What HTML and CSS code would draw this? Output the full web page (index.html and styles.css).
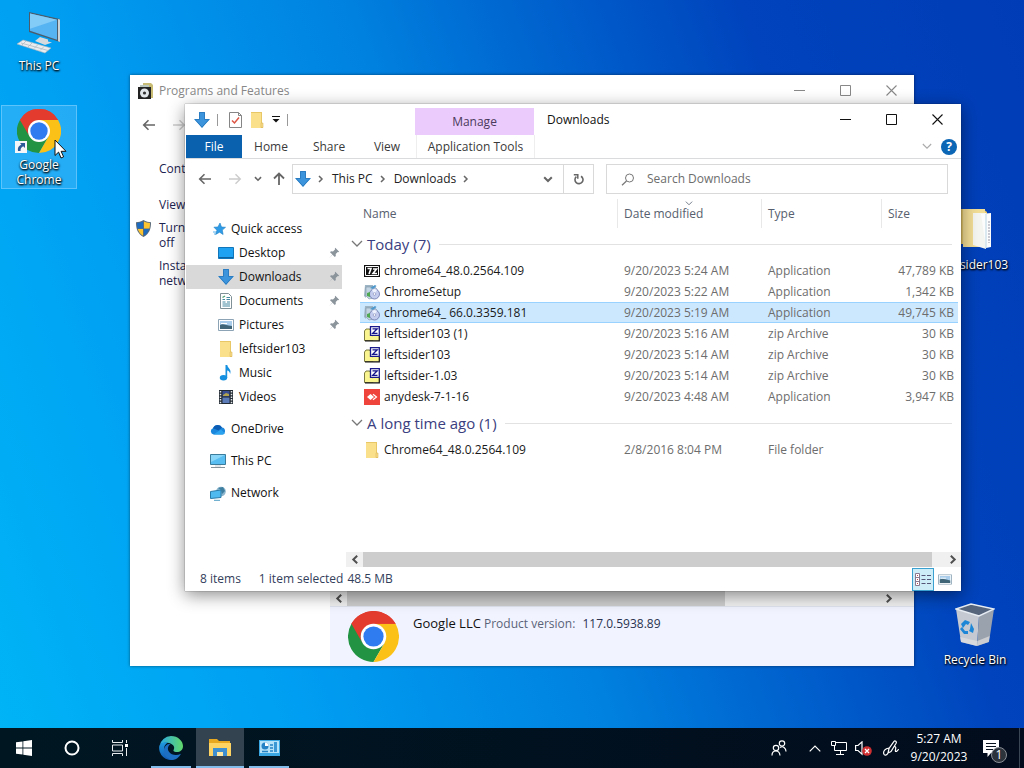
FILE: index.html
```
<!DOCTYPE html>
<html lang="en">
<head>
    <meta charset="UTF-8">
    <meta name="viewport" content="width=device-width, initial-scale=1.0">
    <title>Desktop</title>
    <link rel="stylesheet" href="styles.css">
</head>
<body>
    <!-- shared icons -->
    <svg class="sprite" aria-hidden="true">
        <symbol id="i-down" viewBox="0 0 16 16"><path d="M5 0h6v7h5l-8 9-8-9h5z" fill="#3b94dc"/><path d="M5.500 .5h5v7h4.400L8 15.200 1.100 7.500h4.400z" fill="none" stroke="#2b7cc0"/></symbol>
        <symbol id="i-folder" viewBox="0 0 16 16"><path d="M2 0h11v11h1v5H2z" fill="#e8c766"/><path d="M2 1h10v15H2z" fill="#fbe08c"/><path d="M12 11h2v4.500h-2z" fill="#f8dc86" stroke="#dcb95a" stroke-width=".6"/></symbol>
        <symbol id="i-back" viewBox="0 0 14 12"><path d="M13 6H2M6.500 1.200L1.700 6l4.800 4.800" fill="none" stroke="currentColor" stroke-width="1.600"/></symbol>
        <symbol id="i-fwd" viewBox="0 0 14 12"><path d="M1 6h11M7.500 1.200L12.300 6l-4.800 4.800" fill="none" stroke="currentColor" stroke-width="1.400"/></symbol>
        <symbol id="i-chev" viewBox="0 0 12 8"><path d="M1 1l5 5 5-5" fill="none" stroke="currentColor" stroke-width="1.300"/></symbol>
        <symbol id="i-caret" viewBox="0 0 10 7"><path d="M1.200 1.200L5 5l3.800-3.800" fill="none" stroke="currentColor" stroke-width="2"/></symbol>
        <symbol id="i-right" viewBox="0 0 6 8"><path d="M1 1l3 3-3 3" fill="none" stroke="currentColor" stroke-width="1.500"/></symbol>
        <symbol id="i-sleft" viewBox="0 0 8 9"><path d="M6.200 .8L2.300 4.500l3.900 3.700" fill="none" stroke="#505050" stroke-width="2"/></symbol>
        <symbol id="i-sright" viewBox="0 0 8 9"><path d="M1.800 .8l3.900 3.700-3.900 3.700" fill="none" stroke="#505050" stroke-width="2"/></symbol>
        <symbol id="i-min" viewBox="0 0 11 11"><path d="M0 5.500h11" stroke="currentColor"/></symbol>
        <symbol id="i-max" viewBox="0 0 11 11"><path d="M.5 .5h10v10H.5z" fill="none" stroke="currentColor"/></symbol>
        <symbol id="i-close" viewBox="0 0 11 11"><path d="M.5 .5l10 10M10.500 .5l-10 10" stroke="currentColor" stroke-width="1.100"/></symbol>
        <symbol id="i-pin" viewBox="0 0 12 12"><path d="M7.300 .8l3.900 3.900-1 .6-.5-.2-2 2 .1 2-1 1-2.300-2.400L1 11.200l3.400-3.600L2 5.300l1-1 2 .1 2-2-.2-.6z" fill="#8b949b"/></symbol>
        <symbol id="i-chrome" viewBox="0 0 48 48">
            <path d="M24 24L3.200 12A24 24 0 0 1 44.800 12z" fill="#e33b2e"/>
            <path d="M24 24L3.200 12A24 24 0 0 0 24 48l10.400-18z" fill="#229342"/>
            <path d="M24 12h20.800A24 24 0 0 1 24 48l10.400-18z" fill="#fbc116"/>
            <path d="M3.200 12A24 24 0 0 1 44.800 12H24a12 12 0 0 0-10.400 18z" fill="#e33b2e"/>
            <circle cx="24" cy="24" r="12" fill="#fff"/>
            <circle cx="24" cy="24" r="9.500" fill="#2f7cf0"/>
        </symbol>
        <symbol id="i-zip" viewBox="0 0 16 16"><path d="M.5 5l1.500-2h4v1h3v10.500H.5z" fill="#faf58e" stroke="#5c5a20" stroke-width=".8"/><path d="M9 10h6v4.500H1" fill="#faf58e"/><path d="M15.300 10v4.800H1" fill="none" stroke="#111" stroke-width="1.200"/><path d="M6.500 .7h8.800v8.600H6.500z" fill="#fff" stroke="#1a1a8c" stroke-width="1.300"/><path d="M8.500 2.800h4.700l-4.500 4.500h4.800" fill="none" stroke="#14148c" stroke-width="1.300"/></symbol>
        <symbol id="i-setup" viewBox="0 0 16 16"><path d="M1 1h8v3H2v10L0 12z" fill="#9db4c4"/><path d="M2 3h9l2 2v8l-8 2-3-3z" fill="#c3d5e3" stroke="#8297a8" stroke-width=".6"/><path d="M6 4l5-3 1.500 1L9 5z" fill="#4c97cb"/><circle cx="10.500" cy="10" r="5" fill="#c5cdef" stroke="#6874a8" stroke-width=".8"/><path d="M10.500 10L8 5.800a5 5 0 0 1 5 0z" fill="#eef2ff"/><circle cx="10.500" cy="10" r="1.300" fill="#fff" stroke="#6874a8" stroke-width=".5"/><path d="M3 9l3-1v5l-3-1z" fill="#4fa852"/></symbol>
        <symbol id="i-picture" viewBox="0 0 16 12"><path d="M.5 .5h15v11H.5z" fill="#fff" stroke="#8ba3b5"/><path d="M2 2h12v8H2z" fill="#a9cdea"/><path d="M2 6c3-2 5 0 12 1v3H2z" fill="#3f6577"/><path d="M3 4.500h6" stroke="#fff"/></symbol>
    </svg>

    <main class="desktop">
        <a href="#" class="shortcut this-pc">
            <svg width="44" height="42" viewBox="0 0 44 42">
                <path d="M12 0l31 7v23L12 20z" fill="#4b5d6c"/><path d="M13 1.500l27 6.200v20L13 18.800z" fill="#56b4f2"/><path d="M13 1.500l27 6.200-27 9z" fill="#84ccf8"/><path d="M41 7l2 .5V30l-2-.8z" fill="#c8d2d9"/>
                <path d="M23 25l8 2.500v2l4 1-7 2.500-10-4z" fill="#d4dade"/><path d="M6 28l28 8-6 5L0 32z" fill="#e9edf0" stroke="#a8b4bc" stroke-width=".6"/><path d="M4 31l27 7.500M9 29l-4 4M15 31l-4 4M21 32.500l-4 4M27 34.500l-4 4" stroke="#b0bac1" stroke-width=".8"/>
            </svg>
            <span>This PC</span>
        </a>
        <a href="#" class="shortcut chrome selected">
            <span class="icon-wrap">
                <svg width="44" height="44"><use href="#i-chrome"/></svg>
                <svg class="link-badge" width="12" height="12" viewBox="0 0 12 12"><path d="M0 0h12v12H0z" fill="#f4f6f8"/><path d="M5 2h5v5L8.200 5.200C6 6.400 5.400 7.700 5.600 10H3C2.300 7 3.600 4.800 6.400 3.500z" fill="#2a5a98"/></svg>
            </span>
            <span>Google Chrome</span>
        </a>
        <a href="#" class="shortcut folder">
            <svg width="40" height="44" viewBox="0 0 40 44"><path d="M0 0h28l4 3v32H0z" fill="#e5c66c"/><path d="M8 0h22v38H8z" fill="#f2dd96"/><path d="M18 4h13v36l-13-4z" fill="#f4f4f0"/><path d="M26 5l10-1v34l-5 1z" fill="#fcfcfc"/><path d="M31 5v34" stroke="#b9d4e4"/><path d="M34 12v22" stroke="#99a" stroke-dasharray="2 1"/></svg>
            <span>leftsider103</span>
        </a>
        <a href="#" class="shortcut bin">
            <svg width="40" height="44" viewBox="0 0 40 44"><path d="M1 6l23 7-2 30L6 39z" fill="#c5cad2"/><path d="M24 13l15-7-5 33-12 4z" fill="#9aa2ae"/><path d="M1 6L16 1l23 5-15 7z" fill="#56657c" stroke="#e8edf3" stroke-width="1.400"/><path d="M5 34l17 4-.4 5L6 39zM22.300 38l12.400-5-1 6L22 43z" fill="#dfe0df" opacity=".7"/><path d="M6 21l4-4 5 2-2 3-2-1-3 4zM16 20l3 6-1 4-4-2 1-2zM5 26l4 5h4v-3h-3l-3-4z" fill="#1d86d6"/></svg>
            <span>Recycle Bin</span>
        </a>

        <section class="window programs">
            <header class="titlebar">
                <svg width="15" height="16" viewBox="0 0 15 16"><path d="M5 0h8l2 2v13H5z" fill="#c8bb74"/><path d="M2 2h9v3H2z" fill="#b9c7bf"/><path d="M0 4h13v12H0z" fill="#222"/><circle cx="6.500" cy="10" r="4.500" fill="#e2e6e8"/><circle cx="6.500" cy="10" r="1.600" fill="#333"/></svg>
                <h2>Programs and Features</h2>
                <div class="controls">
                    <button aria-label="Minimize"><svg width="11" height="11"><use href="#i-min"/></svg></button>
                    <button aria-label="Maximize"><svg width="11" height="11"><use href="#i-max"/></svg></button>
                    <button aria-label="Close"><svg width="11" height="11"><use href="#i-close"/></svg></button>
                </div>
            </header>
            <div class="history">
                <button aria-label="Back"><svg width="14" height="12"><use href="#i-back"/></svg></button>
                <button aria-label="Forward" class="off"><svg width="14" height="12"><use href="#i-fwd"/></svg></button>
            </div>
            <div class="programs-body">
                <ul class="tasks">
                    <li><a href="#">Control Panel Home</a></li>
                    <li class="second"><a href="#">View installed updates</a></li>
                    <li>
                        <svg class="shield" width="15" height="17" viewBox="0 0 15 17"><path d="M7.500 0C5 1.500 2.500 2.200 0 2.200 0 9 1.500 13.500 7.500 17 13.500 13.500 15 9 15 2.200 12.500 2.200 10 1.500 7.500 0z" fill="#5b6a78"/><path d="M7 1.500v7H1.500A20 20 0 0 1 1 3c2.500 0 4.500-.8 6-1.500zM8 9h5.300C12.300 12 10.500 14.200 8 15.700z" fill="#1d6bbf"/><path d="M8 1.500c1.500.7 3.500 1.500 6 1.500 0 2-.1 3.800-.5 5.500H8zM1.700 9H7v6.700C4.500 14.200 2.700 12 1.700 9z" fill="#fcc530"/></svg>
                        <a href="#">Turn Windows features on or off</a>
                    </li>
                    <li><a href="#">Install a program from the network</a></li>
                </ul>
                <div class="details">
                    <div class="scrollbar">
                        <button aria-label="Scroll left"><svg width="8" height="9"><use href="#i-sleft"/></svg></button>
                        <div class="track"><div class="thumb"></div></div>
                        <button aria-label="Scroll right"><svg width="8" height="9"><use href="#i-sright"/></svg></button>
                    </div>
                    <div class="product">
                        <svg width="51" height="51"><use href="#i-chrome"/></svg>
                        <p><b>Google LLC</b> <span>Product version:</span> <em>117.0.5938.89</em></p>
                    </div>
                </div>
            </div>
        </section>

        <section class="window explorer">
            <header class="titlebar">
                <div class="quick-tools">
                    <svg width="16" height="16"><use href="#i-down"/></svg>
                    <i></i>
                    <button aria-label="Properties"><svg width="13" height="16" viewBox="0 0 13 16"><path d="M.5 .5h9l3 3v12H.5z" fill="#fff" stroke="#858585"/><path d="M9.500 .5v3h3" fill="none" stroke="#858585"/><path d="M3 8.500l2.500 2.500L10 5.500" fill="none" stroke="#dd5544" stroke-width="1.500"/></svg></button>
                    <button aria-label="New folder"><svg width="16" height="16"><use href="#i-folder"/></svg></button>
                    <button aria-label="Customize"><svg width="8" height="7" viewBox="0 0 8 7"><path d="M0 .5h8" stroke="#111"/><path d="M.5 3h7L4 6.500z" fill="#111"/></svg></button>
                    <i></i>
                </div>
                <div class="context-tab">Manage</div>
                <h2>Downloads</h2>
                <div class="controls">
                    <button aria-label="Minimize"><svg width="11" height="11"><use href="#i-min"/></svg></button>
                    <button aria-label="Maximize"><svg width="11" height="11"><use href="#i-max"/></svg></button>
                    <button aria-label="Close"><svg width="11" height="11"><use href="#i-close"/></svg></button>
                </div>
            </header>
            <nav class="ribbon">
                <button class="file">File</button>
                <button>Home</button>
                <button>Share</button>
                <button>View</button>
                <button class="tools">Application Tools</button>
                <button class="collapse" aria-label="Expand ribbon"><svg width="10" height="7"><use href="#i-chev"/></svg></button>
                <button class="help" aria-label="Help">?</button>
            </nav>
            <div class="address-row">
                <button aria-label="Back"><svg width="14" height="12"><use href="#i-back"/></svg></button>
                <button aria-label="Forward" class="off"><svg width="14" height="12"><use href="#i-fwd"/></svg></button>
                <button aria-label="Recent" class="recent"><svg width="8" height="6"><use href="#i-caret"/></svg></button>
                <button aria-label="Up" class="up"><svg width="12" height="14" viewBox="0 0 12 14"><path d="M6 13V2M1 6.500l5-5 5 5" fill="none" stroke="#666" stroke-width="1.800"/></svg></button>
                <div class="address">
                    <svg width="16" height="16"><use href="#i-down"/></svg>
                    <svg class="sep" width="6" height="8"><use href="#i-right"/></svg>
                    <a href="#">This PC</a>
                    <svg class="sep" width="6" height="8"><use href="#i-right"/></svg>
                    <a href="#">Downloads</a>
                    <svg class="sep" width="6" height="8"><use href="#i-right"/></svg>
                    <button class="drop" aria-label="Previous locations"><svg width="10" height="7"><use href="#i-caret"/></svg></button>
                    <button class="refresh" aria-label="Refresh"><svg width="11" height="12" viewBox="0 0 11 12"><path d="M8 3.200A4 4 0 1 1 3.400 3.600" fill="none" stroke="#666" stroke-width="1.600"/><path d="M.8 1.800h4v4" fill="none" stroke="#666" stroke-width="1.500"/></svg></button>
                </div>
                <label class="search">
                    <svg width="14" height="13" viewBox="0 0 14 13"><circle cx="8.500" cy="5" r="4" fill="none" stroke="#777"/><path d="M5.500 8L1 12.300" stroke="#777" stroke-width="1.200"/></svg>
                    <input type="search" aria-label="Search Downloads" placeholder="Search Downloads">
                </label>
            </div>
            <div class="explorer-body">
                <ul class="places">
                    <li><a href="#"><svg width="16" height="16" viewBox="0 0 16 16"><path d="M10 2l1.500 4 4 .3-3.200 2.800.8 4.400-3.500-2.300-4 2.300 1.300-4.300-3-3 4-.2z" fill="#2f9be6" stroke="#1d7fc4" stroke-width=".6"/><path d="M3 11h3M4 13h1.500" stroke="#57b1ec"/></svg>Quick access</a></li>
                    <li class="sub"><a href="#"><svg width="16" height="12" viewBox="0 0 16 12"><path d="M.5 .5h15v11H.5z" fill="#1fa2f2" stroke="#1276bb"/><path d="M1 10.500h14" stroke="#0d639f"/></svg>Desktop</a><svg class="pin" width="12" height="12"><use href="#i-pin"/></svg></li>
                    <li class="sub current"><a href="#"><svg width="16" height="16"><use href="#i-down"/></svg>Downloads</a><svg class="pin" width="12" height="12"><use href="#i-pin"/></svg></li>
                    <li class="sub"><a href="#"><svg width="16" height="16" viewBox="0 0 16 16"><path d="M2.500 .5h8l3 3v12h-11z" fill="#fff" stroke="#7f9096"/><path d="M4.500 6.500h2.500M8.500 4.500h3.500M8.500 6.500h3.500M4.500 9h3M9 9h3M4.500 11h7.500M4.500 13h7.500" stroke="#4288a0"/><path d="M4.500 4.500L7 3" stroke="#4f9f70" stroke-width="1.400"/></svg>Documents</a><svg class="pin" width="12" height="12"><use href="#i-pin"/></svg></li>
                    <li class="sub"><a href="#"><svg width="16" height="12"><use href="#i-picture"/></svg>Pictures</a><svg class="pin" width="12" height="12"><use href="#i-pin"/></svg></li>
                    <li class="sub"><a href="#"><svg width="16" height="16"><use href="#i-folder"/></svg>leftsider103</a></li>
                    <li class="sub"><a href="#"><svg width="16" height="16" viewBox="0 0 16 16"><ellipse cx="5.500" cy="12.800" rx="3.700" ry="2.700" fill="#1590e0"/><path d="M7.500 0h1.800c.4 3.500 4.600 4 2.800 9-.3-2.500-1.500-3.200-2.900-3.500V13H7.500z" fill="#1590e0"/></svg>Music</a></li>
                    <li class="sub"><a href="#"><svg width="16" height="16" viewBox="0 0 16 16"><path d="M1 1h14v14H1z" fill="#222a33"/><path d="M4.500 2h7v5.500h-7z" fill="#3a4e94"/><path d="M4.500 8.500h7V14h-7z" fill="#5a7ab8"/><path d="M5 6l3-2 3 1v2H5z" fill="#b3a34c"/><path d="M2.500 2v13M13.500 2v13" stroke="#e3e6e8" stroke-width="1.500" stroke-dasharray="1.500 1.200"/></svg>Videos</a></li>
                    <li class="root"><a href="#"><svg width="16" height="12" viewBox="0 0 16 12"><path d="M3.500 11.500a3.300 3.300 0 0 1-.6-6.300A5 5 0 0 1 12 4.500a3.600 3.600 0 0 1 .5 7z" fill="#1a87dc"/><path d="M3 5.300A5 5 0 0 1 12 4.500L8.500 7.500z" fill="#0d5cb4"/><path d="M3.500 11.500L11 6.600l3.800 4c-.6.600-1.300.9-2.300.9z" fill="#2ba3ef"/></svg>OneDrive</a></li>
                    <li class="root"><a href="#"><svg width="16" height="15" viewBox="0 0 16 15"><path d="M.5 .5h15v10H.5z" fill="#58bdf0" stroke="#3b7b9c"/><path d="M1 1h14L1 8z" fill="#8ad6f8"/><path d="M1 13.500h14" stroke="#87939b"/><path d="M5 12h6" stroke="#c3ccd2"/></svg>This PC</a></li>
                    <li class="root"><a href="#"><svg width="16" height="15" viewBox="0 0 16 15"><circle cx="11" cy="5.500" r="4.800" fill="#8bb6cd"/><path d="M8 2l3 2 1 4 3-3-2-4z" fill="#3f7e9e"/><path d="M.5 5.500L11 4v7.500L.5 12.500z" fill="#4fbaf0" stroke="#2a7aa8"/><path d="M4 14.300h6" stroke="#4f9fc5"/></svg>Network</a></li>
                </ul>
                <div class="files">
                    <table>
                        <colgroup><col><col class="c-date"><col class="c-type"><col class="c-size"></colgroup>
                        <thead>
                            <tr><th>Name</th><th>Date modified<svg class="sort" width="8" height="5"><use href="#i-chev"/></svg></th><th>Type</th><th>Size</th></tr>
                        </thead>
                        <tbody>
                            <tr class="group"><th colspan="4"><div><svg width="12" height="8"><use href="#i-chev"/></svg><span>Today (7)</span></div></th></tr>
                            <tr><td><div><svg width="16" height="16" viewBox="0 0 16 16"><path d="M0 2h16v12H0z" fill="#111"/><path d="M1.500 3.500h13v9h-13z" fill="none" stroke="#fff"/><path d="M3.500 5.500h3.500l-2 5.500M9 6h3.500L9 10.500h4" fill="none" stroke="#fff" stroke-width="1.600"/></svg>chrome64_48.0.2564.109</div></td><td>9/20/2023 5:24 AM</td><td>Application</td><td>47,789 KB</td></tr>
                            <tr><td><div><svg width="16" height="16"><use href="#i-setup"/></svg>ChromeSetup</div></td><td>9/20/2023 5:22 AM</td><td>Application</td><td>1,342 KB</td></tr>
                            <tr class="selected"><td><div><svg width="16" height="16"><use href="#i-setup"/></svg>chrome64_ 66.0.3359.181</div></td><td>9/20/2023 5:19 AM</td><td>Application</td><td>49,745 KB</td></tr>
                            <tr><td><div><svg width="16" height="16"><use href="#i-zip"/></svg>leftsider103 (1)</div></td><td>9/20/2023 5:16 AM</td><td>zip Archive</td><td>30 KB</td></tr>
                            <tr><td><div><svg width="16" height="16"><use href="#i-zip"/></svg>leftsider103</div></td><td>9/20/2023 5:14 AM</td><td>zip Archive</td><td>30 KB</td></tr>
                            <tr><td><div><svg width="16" height="16"><use href="#i-zip"/></svg>leftsider-1.03</div></td><td>9/20/2023 5:14 AM</td><td>zip Archive</td><td>30 KB</td></tr>
                            <tr><td><div><svg width="16" height="16" viewBox="0 0 16 16"><path d="M0 0h16v16H0z" fill="#ef443b"/><path d="M6.500 5L10 8l-3.500 3L3 8z" fill="#fff"/><path d="M9 5.200L12.500 8 9 10.800" fill="none" stroke="#fff" stroke-width="1.200"/></svg>anydesk-7-1-16</div></td><td>9/20/2023 4:48 AM</td><td>Application</td><td>3,947 KB</td></tr>
                            <tr class="group"><th colspan="4"><div><svg width="12" height="8"><use href="#i-chev"/></svg><span>A long time ago (1)</span></div></th></tr>
                            <tr><td><div><svg width="16" height="16"><use href="#i-folder"/></svg>Chrome64_48.0.2564.109</div></td><td>2/8/2016 8:04 PM</td><td>File folder</td><td></td></tr>
                        </tbody>
                    </table>
                    <div class="scrollbar">
                        <button aria-label="Scroll left"><svg width="8" height="9"><use href="#i-sleft"/></svg></button>
                        <div class="track"><div class="thumb"></div></div>
                        <button aria-label="Scroll right"><svg width="8" height="9"><use href="#i-sright"/></svg></button>
                    </div>
                </div>
            </div>
            <footer class="status">
                <span class="count">8 items</span>
                <span>1 item selected</span>
                <span class="size">48.5 MB</span>
                <button class="view active" aria-label="Details"><svg width="16" height="13" viewBox="0 0 16 13"><path d="M.5 .5h4v12h-4zM.5 4.500h4M.5 8.500h4" fill="#fff" stroke="#8a7890"/><path d="M2.500 2v1M2.500 6v1M2.500 10v1" stroke="#c04848"/><path d="M6.500 2.500h4M12 2.500h4M6.500 6.500h4M12 6.500h4M6.500 10.500h4M12 10.500h4" stroke="#557"/></svg></button>
                <button class="view" aria-label="Large icons"><svg width="14" height="11" viewBox="0 0 16 12"><use href="#i-picture"/></svg></button>
            </footer>
        </section>

        <svg class="cursor" width="13" height="20" viewBox="0 0 13 20"><path d="M1 1v15.500l3.600-3.400L7 19l2.600-1.200-2.500-5.500H12z" fill="#fff" stroke="#111"/></svg>
    </main>

    <footer class="taskbar">
        <button aria-label="Start"><svg width="16" height="16" viewBox="0 0 16 16"><path d="M0 2.300L6.500 1.400v6.200H0zM7.300 1.300L16 0v7.600H7.300zM0 8.400h6.500v6.200L0 13.700zM7.300 8.400H16V16l-8.700-1.300z" fill="#fff"/></svg></button>
        <button aria-label="Cortana"><svg width="16" height="16" viewBox="0 0 16 16"><circle cx="8" cy="8" r="6.500" fill="none" stroke="#fff" stroke-width="2"/></svg></button>
        <button aria-label="Task View"><svg width="16" height="16" viewBox="0 0 16 16" fill="none" stroke="#e8ecef"><path d="M.5 0v2.500h10V0M.5 5h10v6H.5zM.5 16v-2.500h10V16M14.500 0v3M14.500 8v8"/><path d="M13 4h3v3h-3z" fill="#fff" stroke="none"/></svg></button>
        <button aria-label="Edge" class="app edge"><svg width="24" height="24" viewBox="0 0 24 24">
            <defs>
                <linearGradient id="edge-top"><stop offset="0" stop-color="#2aa8e4"/><stop offset="1" stop-color="#62d86a"/></linearGradient>
                <linearGradient id="edge-side" x2="0" y2="1"><stop offset="0" stop-color="#1f9be0"/><stop offset="1" stop-color="#1258b4"/></linearGradient>
            </defs>
            <path d="M.5 10A12 12 0 0 1 12 0c7 0 12 5 12 10 0 4-3 6-6 6-3.500 0-4-1.500-3.200-2.600C16 11.500 14.500 8 10 7 5 6 1 8 .5 10z" fill="url(#edge-top)"/>
            <path d="M.3 10C1 7 5 5.500 9 6.500c-4 2-5 6.500-3 10.500 1.800 3.800 5.500 6 9.500 6.500A12 12 0 0 1 .3 10z" fill="url(#edge-side)"/>
            <path d="M11.500 8C9 9.500 8 13 10 15.800c2.300 3.300 7.500 4.200 12 2C20 21.500 17 24 13 24 7 22.500 4 18 5 13c.7-3.500 3.500-5.600 6.500-5z" fill="#1d6fc4"/>
        </svg></button>
        <button aria-label="File Explorer" class="app open"><svg width="22" height="18" viewBox="0 0 22 18"><path d="M0 0h8l2 2h11v5H0z" fill="#e8a921"/><path d="M0 4h22v13H0z" fill="#fdd463"/><path d="M4 9h14v8h-4v-4H8v4H4z" fill="#3e8fd0"/><path d="M8 13h6v4H8z" fill="#ffe9a6"/></svg></button>
        <button aria-label="Control Panel" class="app"><svg width="21" height="16" viewBox="0 0 21 16"><path d="M0 0h21v16H0z" fill="#3aa6e2"/><path d="M1 1h19v12H1z" fill="#b5e2f8"/><circle cx="6" cy="6" r="3.500" fill="#2582c4"/><path d="M6 6V2.500A3.500 3.500 0 0 1 9.500 6z" fill="#fff"/><path d="M11 5h3M11 8h3M11 11h3M3 11.500h6" stroke="#2582c4" stroke-width="1.500"/><path d="M15 2h3v10h-3z" fill="#3c98d5"/></svg></button>
        <div class="tray">
            <button class="people" aria-label="People"><svg width="16" height="16" viewBox="0 0 16 16" fill="none" stroke="#fff" stroke-width="1.200"><circle cx="11" cy="3.500" r="2.700"/><circle cx="5" cy="8" r="2.700"/><path d="M1 15.500c0-6 7.500-6 8 0M9 7.500c3-2 6 .5 6 4"/></svg></button>
            <button class="more" aria-label="Show hidden icons"><svg width="12" height="7" viewBox="0 0 12 7"><path d="M.7 6.300L6 1l5.300 5.300" fill="none" stroke="#fff" stroke-width="1.200"/></svg></button>
            <button aria-label="Network"><svg width="16" height="14" viewBox="0 0 16 14" fill="none" stroke="#fff"><path d="M5 1.500h10.500v8H3.500V5M9.500 9.500v4M5 13.500h8"/><path d="M.5 .5h4v4h-4z"/></svg></button>
            <button aria-label="Volume"><svg width="17" height="15" viewBox="0 0 17 15"><path d="M.6 4.500H3L7 .9v12.200L3 9.500H.6z" fill="none" stroke="#fff" stroke-width="1.200"/><circle cx="12" cy="10" r="4.800" fill="#cf2f31"/><path d="M10 8l4 4M14 8l-4 4" stroke="#fff" stroke-width="1.300"/></svg></button>
            <button class="pen" aria-label="Windows Ink"><svg width="16" height="16" viewBox="0 0 16 16" fill="none" stroke="#fff" stroke-width="1.200"><path d="M5 13l1-4.500L11 1.300c1-1 3 .3 2.100 1.900L8 11.500zM11.500 6.500c3 0-.5 5 1.500 5 1.300 0 1.500-2 3-2M6 8C2 8.500 0 11.500 .8 13.800c.6 2 3 1.800 4.200-.8"/></svg></button>
            <div class="clock"><time>5:27 AM</time><time>9/20/2023</time></div>
            <button class="notify" aria-label="Notifications"><svg width="16" height="17" viewBox="0 0 16 17"><path d="M0 0h16v13h-8l-3.500 4v-4H0z" fill="#fff"/><path d="M3 3.500h10M3 6.500h10M3 9.500h7" stroke="#0a1420"/></svg><span>1</span></button>
        </div>
    </footer>
</body>
</html>
```
FILE: styles.css
```
* {
    box-sizing: border-box;
}
body {
    font-family: 'Open Sans', 'Noto Sans', sans-serif;
    font-size: 12px;
    line-height: 16px;
    margin: 0;
    height: 100vh;
    display: flex;
    flex-direction: column;
    overflow: hidden;
    color: #111111;
}
button {
    font: inherit;
    color: inherit;
    border: none;
    padding: 0;
    background: none;
    display: flex;
    align-items: center;
    justify-content: center;
}
a {
    color: inherit;
    text-decoration: none;
}
ul {
    list-style: none;
    margin: 0;
    padding: 0;
}
h2 {
    font-size: 12px;
    font-weight: normal;
    margin: 0;
}
svg {
    display: block;
    flex: none;
}
.sprite {
    position: absolute;
    width: 0;
    height: 0;
}

/* desktop */
.desktop {
    flex: 1;
    position: relative;
    background: linear-gradient(70deg, #00b4f6 0%, #009ef2 24%, #0082e0 47%, #0066d0 60%, #0043bc 78%, #003cb6 100%);
}
.shortcut {
    position: absolute;
    width: 76px;
    display: flex;
    flex-direction: column;
    align-items: center;
    text-align: center;
    line-height: 15px;
    color: #ffffff;
    text-shadow: 0 1px 2px #000000, 1px 1px 2px #000000;
}
.this-pc {
    left: 1px;
    top: 12px;
    gap: 4px;
}
.chrome {
    left: 1px;
    top: 105px;
    padding: 3px 8px 0;
    gap: 4px;
    height: 84px;
}
.shortcut.selected {
    background: rgba(90, 190, 250, 0.4);
    border: 1px solid rgba(150, 215, 255, 0.5);
}
.icon-wrap {
    position: relative;
}
.link-badge {
    position: absolute;
    left: -2px;
    bottom: 0;
}
.folder {
    right: 11px;
    top: 209px;
    gap: 4px;
}
.bin {
    right: 11px;
    top: 603px;
    gap: 5px;
}
.cursor {
    position: absolute;
    left: 54px;
    top: 139px;
}

/* windows */
.window {
    position: absolute;
    display: flex;
    flex-direction: column;
    background: #ffffff;
}
.programs {
    left: 130px;
    right: 110px;
    top: 75px;
    bottom: 62px;
    box-shadow: 0 0 3px rgba(0, 0, 0, 0.5);
}
.explorer {
    left: 185px;
    right: 63px;
    top: 104px;
    bottom: 137px;
    padding-left: 1px;
    box-shadow: 0 0 1px rgba(0, 0, 0, 0.6), 0 4px 16px rgba(0, 0, 0, 0.45);
}
.titlebar {
    display: flex;
    align-items: center;
    height: 31px;
}
.controls {
    display: flex;
    margin-left: auto;
}
.controls button {
    width: 46px;
    height: 30px;
}

/* programs and features */
.programs .titlebar {
    color: #888888;
    padding-left: 8px;
}
.programs .titlebar h2 {
    margin-left: 6px;
}
.history {
    display: flex;
    gap: 16px;
    padding: 13px 12px;
    color: #666666;
}
.off {
    color: #cccccc;
}
.programs-body {
    flex: 1;
    display: flex;
}
.tasks {
    width: 200px;
    padding: 17px 8px 0 29px;
    line-height: 15px;
    color: #1c2350;
}
.tasks li {
    position: relative;
    margin-bottom: 8px;
}
.tasks .second {
    margin-top: 21px;
}
.shield {
    position: absolute;
    left: -23px;
    top: 0;
}
.details {
    flex: 1;
    display: flex;
    flex-direction: column;
    justify-content: flex-end;
}
.scrollbar {
    display: flex;
    height: 15px;
    background: #f0f0f0;
}
.scrollbar button {
    width: 17px;
}
.track {
    flex: 1;
}
.thumb {
    height: 100%;
    width: 98%;
    background: #cdcdcd;
}
.details .scrollbar {
    padding-right: 17px;
}
.details .thumb {
    width: 71%;
}
.product {
    display: flex;
    gap: 14px;
    height: 60px;
    padding: 4px 18px;
    background: #f1f4ff;
    border-top: 1px solid #dde2ee;
}
.product p {
    margin: 4px 0;
    color: #5a6378;
}
.product b {
    font-size: 13px;
    font-weight: normal;
    color: #111111;
}
.product em {
    font-style: normal;
    color: #2b3350;
    margin-left: 4px;
}

/* explorer ribbon */
.explorer .titlebar {
    padding-right: 1px;
}
.quick-tools {
    display: flex;
    align-items: center;
    gap: 7px;
    width: 229px;
    padding-left: 8px;
}
.quick-tools i {
    width: 1px;
    height: 12px;
    background: #999999;
}
.quick-tools i:first-of-type {
    margin-right: 4px;
}
.context-tab {
    width: 119px;
    height: 27px;
    margin-top: 4px;
    padding-top: 6px;
    text-align: center;
    background: #eacbfb;
    color: #4a3a5c;
}
.explorer .titlebar h2 {
    margin-left: 13px;
}
.ribbon {
    display: flex;
    align-items: center;
    height: 24px;
    border-bottom: 1px solid #dadbdc;
    color: #3a3a3a;
}
.ribbon button {
    height: 23px;
    width: 58px;
}
.ribbon .file {
    width: 56px;
    background: #0a62ae;
    color: #ffffff;
}
.ribbon .tools {
    width: 119px;
    border: 1px solid #eeeeee;
    border-width: 0 1px;
}
.ribbon .collapse {
    width: 22px;
    margin-left: auto;
    color: #aaaaaa;
}
.ribbon .help {
    width: 16px;
    height: 16px;
    margin: 0 4px 0 3px;
    border-radius: 50%;
    background: #0b66b5;
    color: #ffffff;
    font-weight: bold;
}
.address-row {
    display: flex;
    align-items: center;
    height: 40px;
    padding: 0 13px 0 12px;
    color: #666666;
}
.address-row .off {
    color: #cccccc;
    margin-left: 16px;
}
.recent {
    margin-left: 12px;
}
.up {
    margin: 0 7px 0 11px;
}
.address {
    flex: 298;
    display: flex;
    align-items: center;
    height: 30px;
    border: 1px solid #d9d9d9;
    padding-left: 2px;
}
.address a {
    color: #222222;
}
.sep {
    margin: 0 8px 0 7px;
}
.drop {
    width: 30px;
    margin-left: auto;
}
.refresh {
    width: 30px;
    height: 28px;
    border-left: 1px solid #d9d9d9;
}
.search {
    flex: 312;
    display: flex;
    align-items: center;
    gap: 12px;
    height: 30px;
    margin-left: 12px;
    padding: 0 14px;
    border: 1px solid #d9d9d9;
}
.search input {
    flex: 1;
    min-width: 0;
    border: none;
    padding: 0;
    background: none;
    font: inherit;
    outline: none;
    appearance: none;
}
.search input::placeholder {
    color: #6d6d6d;
}

/* places */
.explorer-body {
    flex: 1;
    display: flex;
    min-height: 0;
}
.places {
    width: 156px;
    margin-right: 4px;
    padding-top: 18px;
}
.places li {
    display: flex;
    align-items: center;
    height: 24px;
    padding: 0 2px 0 24px;
}
.places li.sub {
    padding-left: 32px;
}
.places li.root {
    margin-top: 8px;
}
.places a {
    display: flex;
    align-items: center;
    gap: 5px;
}
.places .current {
    background: #d9d9d9;
}
.pin {
    margin-left: auto;
}

/* file list */
.files {
    flex: 1;
    display: flex;
    flex-direction: column;
    justify-content: space-between;
}
table {
    table-layout: fixed;
    border-collapse: separate;
    border-spacing: 0;
    margin: 0 3px 0 14px;
    color: #6d6d6d;
}
.c-date {
    width: 144px;
}
.c-type {
    width: 120px;
}
.c-size {
    width: 77px;
}
th {
    font-weight: normal;
    text-align: left;
    padding: 0 0 0 6px;
}
thead th {
    position: relative;
    height: 29px;
    color: #56606e;
    border-left: 1px solid #e8e8e8;
}
thead th:first-child {
    border: none;
    padding-left: 3px;
}
.sort {
    position: absolute;
    left: 67px;
    top: 2px;
}
td {
    height: 21px;
    padding: 0 0 0 7px;
    white-space: nowrap;
}
td:first-child {
    color: #1a1a1a;
    padding-left: 4px;
}
td:last-child {
    text-align: right;
    padding-right: 4px;
}
td div {
    display: flex;
    align-items: center;
    gap: 4px;
}
.selected td {
    background: #cce8ff;
    border-top: 1px solid #99d1ff;
    border-bottom: 1px solid #99d1ff;
}
.group th {
    height: 32px;
    padding: 0;
}
.group div {
    display: flex;
    align-items: center;
    margin-left: -9px;
    margin-right: 6px;
    font-size: 15px;
    color: #3b4080;
}
.group svg {
    color: #777777;
    margin-right: 4px;
}
.group div::after {
    content: "";
    flex: 1;
    height: 1px;
    margin-left: 8px;
    background: #e2e2e2;
}

/* status bar */
.status {
    display: flex;
    align-items: center;
    height: 24px;
    padding: 0 5px 0 14px;
    color: #33405c;
}
.count {
    margin-right: 18px;
}
.size {
    margin: 0 auto 0 4px;
}
.view {
    width: 22px;
    height: 23px;
}
.view.active {
    background: #cdeef8;
    border: 1px solid #3aa0d0;
}

/* taskbar */
.taskbar {
    display: flex;
    height: 40px;
    background: linear-gradient(90deg, #001722, #020c1c);
    color: #ffffff;
}
.taskbar > button {
    width: 48px;
}
.taskbar .app {
    margin-left: 1px;
    position: relative;
}
.taskbar .edge {
    margin-left: 3px;
}
.taskbar .app::after {
    content: "";
    position: absolute;
    left: 4px;
    right: 4px;
    bottom: 0;
    height: 2px;
    background: #82bdec;
}
.taskbar .open {
    background: #334450;
}
.taskbar .open::after {
    left: 0;
    right: 0;
}
.tray {
    display: flex;
    align-items: center;
    margin-left: auto;
    padding-right: 4px;
}
.tray button {
    width: 24px;
    height: 40px;
}
.tray .people {
    width: 48px;
}
.tray .pen {
    width: 32px;
}
.clock {
    width: 64px;
    display: flex;
    flex-direction: column;
    align-items: center;
    line-height: 18px;
}
.tray .notify {
    position: relative;
    width: 49px;
    padding-right: 8px;
    border-right: 1px solid #3a4654;
}
.notify span {
    position: absolute;
    left: 20px;
    top: 19px;
    width: 16px;
    height: 16px;
    border: 1px solid #8a8f96;
    border-radius: 50%;
    background: #2d333b;
    line-height: 14px;
    text-align: center;
}
```
